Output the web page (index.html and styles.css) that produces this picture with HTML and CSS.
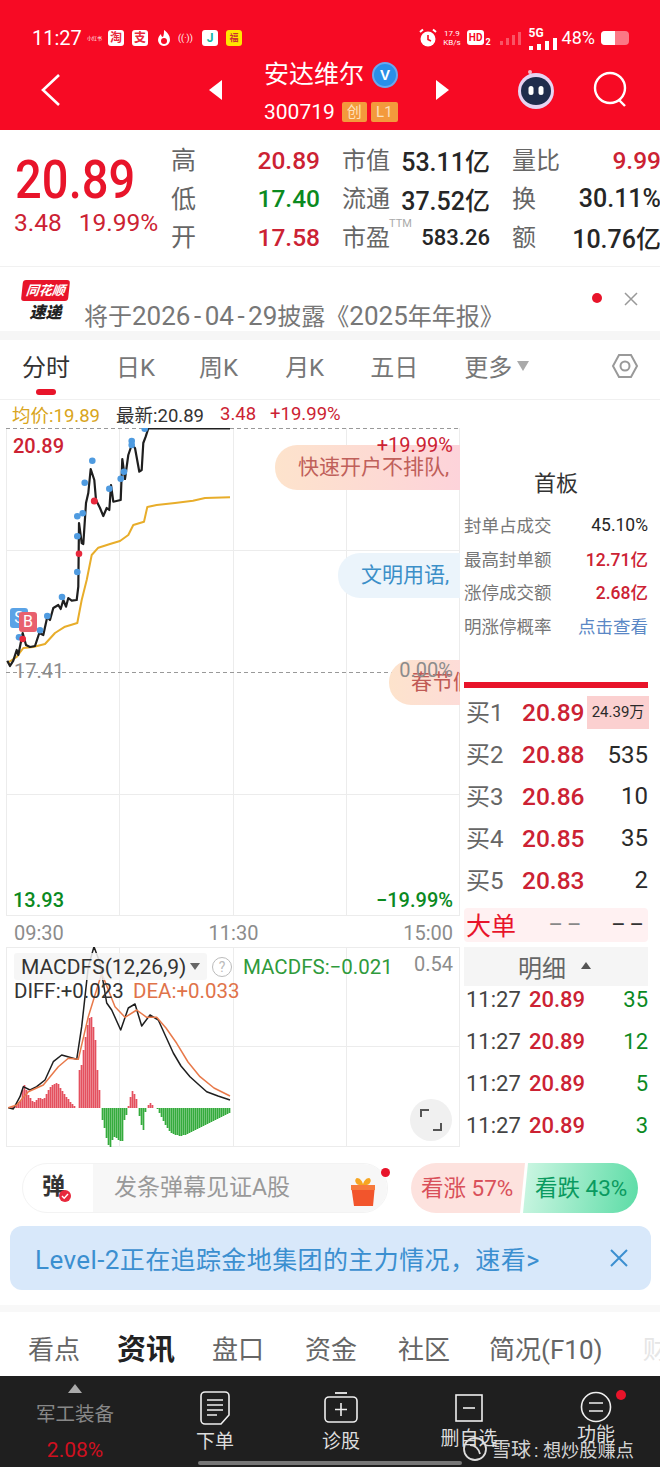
FILE: index.html
```html
<!DOCTYPE html>
<html lang="zh-CN">
<head>
<meta charset="utf-8">
<title>安达维尔 300719</title>
<link rel="stylesheet" href="styles.css">
</head>
<body>
<div class="app">
  <header class="top">
    <div class="status">
      <span class="clock">11:27</span>
      <span class="st-tiny">小红书</span>
      <span class="st-app st-red">淘</span>
      <span class="st-app st-red2">支</span>
      <svg class="st-ico" width="16" height="18" viewBox="0 0 16 18"><path d="M8 1c3 2 6 5 6 10a6 6 0 0 1-12 0c0-3 2-5 3-6 0 2 1 3 2 3 1-2 1-5 1-7z" fill="#fff"/><circle cx="8" cy="12" r="3" fill="#f70a24"/></svg>
      <span class="st-wifi">((·))</span>
      <span class="st-app st-j">J</span>
      <span class="st-app st-y">福</span>
      <span class="st-spacer"></span>
      <svg class="st-ico" width="18" height="20" viewBox="0 0 18 20"><circle cx="9" cy="11" r="7.5" fill="#fff"/><path d="M9 7v4.5l3 1.5" stroke="#f70a24" stroke-width="1.6" fill="none"/><path d="M1 4l3-2.5M17 4l-3-2.5" stroke="#fff" stroke-width="2"/></svg>
      <span class="st-speed">17.9<br>KB/s</span>
      <span class="st-hd">HD</span><span class="st-hd2">2</span>
      <svg class="st-sig st-sig-a" width="22" height="14" viewBox="0 0 22 14"><g fill="#fff" opacity=".3"><rect x="0" y="10" width="3" height="4"/><rect x="6" y="7" width="3" height="7"/><rect x="12" y="4" width="3" height="10"/><rect x="18" y="1" width="3" height="13"/></g></svg>
      <span class="st-5g">5G</span>
      <svg class="st-sig st-sig-b" width="28" height="12" viewBox="0 0 28 12"><g fill="#fff"><rect x="0" y="8" width="4" height="4"/><rect x="8" y="6" width="4" height="6"/><rect x="16" y="3" width="4" height="9"/><rect x="24" y="0" width="4" height="12"/></g></svg>
      <span class="st-batt-text">48%</span>
      <span class="batt"><span class="batt-fill"></span></span>
    </div>
    <nav class="nav">
      <svg class="back" width="22" height="34" viewBox="0 0 22 34"><path d="M19 2 3 17l16 15" fill="none" stroke="#fff" stroke-width="2.6"/></svg>
      <span class="tri-l"></span>
      <div class="title">
        <div class="t-name">安达维尔<span class="vbadge">V</span></div>
        <div class="t-code">300719<span class="tag t1">创</span><span class="tag t2">L1</span></div>
      </div>
      <span class="tri-r"></span>
      <svg class="robot" width="40" height="42" viewBox="0 0 40 42"><circle cx="14" cy="4" r="2" fill="#f6b5c5"/><path d="M14 5l3 5" stroke="#f6b5c5" stroke-width="1.5"/><circle cx="20" cy="23" r="18" fill="#e6d4f2"/><ellipse cx="20" cy="23" rx="15" ry="14" fill="#1f2c4c"/><rect x="12.5" y="18" width="5" height="9" rx="2.5" fill="#fff"/><rect x="22.5" y="18" width="5" height="9" rx="2.5" fill="#fff"/></svg>
      <svg class="search" width="36" height="38" viewBox="0 0 36 38"><circle cx="17" cy="17" r="15" fill="none" stroke="#fff" stroke-width="2.4"/><path d="m26 29 6 6" stroke="#fff" stroke-width="2.4"/></svg>
    </nav>
  </header>

  <section class="quote">
    <div class="q-main">
      <div class="q-price">20.89</div>
      <div class="q-sub"><span>3.48</span><span>19.99%</span></div>
    </div>
    <div class="q-grid">
      <div class="cell"><span class="lab lab-big">高</span><b class="up">20.89</b></div>
      <div class="cell"><span class="lab">市值</span><b class="dark">53.11亿</b></div>
      <div class="cell"><span class="lab">量比</span><b class="up">9.99</b></div>
      <div class="cell"><span class="lab lab-big">低</span><b class="down">17.40</b></div>
      <div class="cell"><span class="lab">流通</span><b class="dark">37.52亿</b></div>
      <div class="cell"><span class="lab">换</span><b class="dark">30.11%</b></div>
      <div class="cell"><span class="lab lab-big">开</span><b class="up">17.58</b></div>
      <div class="cell"><span class="lab">市盈<sup class="ttm">TTM</sup></span><b class="dark small">583.26</b></div>
      <div class="cell"><span class="lab">额</span><b class="dark">10.76亿</b></div>
    </div>
  </section>

  <section class="notice">
    <div class="logo"><span class="logo-a">同花顺</span><span class="logo-b">速递</span></div>
    <div class="n-text">将于<span class="n-num">2026<span class="hy">-</span>04<span class="hy">-</span>29</span>披露《<span class="n-num">2025</span>年年报》</div>
    <span class="n-dot"></span>
    <svg class="n-x" width="14" height="14" viewBox="0 0 14 14"><path d="m1 1 12 12M13 1 1 13" stroke="#999" stroke-width="1.5"/></svg>
  </section>
  <div class="band"></div>

  <div class="tabs">
    <span class="tab on">分时</span>
    <span class="tab t-r">日K</span>
    <span class="tab t-z">周K</span>
    <span class="tab t-y">月K</span>
    <span class="tab t-w">五日</span>
    <span class="tab t-m">更多<i class="caret"></i></span>
    <svg class="hex" width="28" height="28" viewBox="0 0 28 28"><path d="M8 3h12l6 11-6 11H8L2 14z" fill="none" stroke="#999" stroke-width="2"/><circle cx="14" cy="14" r="4.5" fill="none" stroke="#999" stroke-width="2"/></svg>
  </div>

  <div class="legend"><span class="avg">均价:19.89</span><span class="new">最新:20.89</span><span class="up">3.48</span><span class="up">+19.99%</span></div>

  <div class="main">
    <div class="left">
      <div class="chart">
        <svg class="plot" width="460" height="488" viewBox="0 428 460 488">
          <g stroke="#ececec" stroke-width="1" fill="none">
            <path d="M6.5 428v488M119.5 428v488M233.5 428v488M346.5 428v488M459.5 428v488M6.5 550.5h453M6.5 794.5h453M6.5 915.5h453"/>
          </g>
          <path d="M6 428.5h454M6 672.5h454" stroke="#999" stroke-width="1" stroke-dasharray="4 3" fill="none"/>
          <polyline fill="none" stroke="#e8ad2a" stroke-width="2" stroke-linejoin="round" points="7.3,663 16.7,657 23.3,648 33.3,647 45,644 55,633 65,626.7 77.3,623 81.7,600 86.7,580 91.7,555 98.3,547.7 110,544 120,541 128.3,535 133.3,525 144,521.7 147.3,507 156.7,505 175,503 193,500.7 205,498 230,497.3"/>
          <polyline fill="none" stroke="#1f1f1f" stroke-width="2.2" stroke-linejoin="round" points="7.3,660.7 10,666 13.3,660.7 16.7,650 18.3,655 20.7,643 22.7,633 26,645 30,647 35,646 39.3,633 43.3,635 47.3,616.7 50,620 53.3,608 58.3,605 60.7,609 63.3,600 66,606.7 68.3,598 71.7,600.7 76.7,600 78.3,586.7 79,523 81.7,543 83.3,544 86,503 88.3,493 90.7,469 94.3,480 96,500 100,508 103.3,516 106.7,508 109.3,510 111,485 113.3,501.7 120.7,500 122.3,459 125,479 128.3,455 131.7,445 135,448 139.3,471.7 141.7,470 143.3,443 145.7,436.7 148.3,428.5 230,428.5"/>
          <g fill="#4f9be0">
            <circle cx="92.3" cy="460.7" r="3.3"/><circle cx="84.7" cy="482.7" r="3.3"/><circle cx="77.3" cy="516.3" r="3.3"/><circle cx="82.7" cy="513.3" r="3.3"/><circle cx="77.3" cy="536.3" r="3.3"/><circle cx="77.3" cy="572" r="3.3"/><circle cx="62" cy="597" r="3.3"/><circle cx="47.3" cy="616" r="3.3"/><circle cx="40" cy="630.3" r="3.3"/><circle cx="19" cy="637.3" r="3.3"/><circle cx="109.3" cy="488.7" r="3.3"/><circle cx="120.7" cy="478.7" r="3.3"/><circle cx="124" cy="471.7" r="3.3"/><circle cx="131.7" cy="441" r="3.3"/><circle cx="131.7" cy="445" r="3.3"/><circle cx="144.7" cy="428.7" r="3.3"/>
          </g>
          <g fill="#e8283c">
            <circle cx="94.3" cy="501" r="3.5"/><circle cx="79" cy="553.7" r="3.3"/><circle cx="22.7" cy="639" r="3.3"/>
          </g>
        </svg>
        <span class="mark mark-s">S</span>
        <span class="mark mark-b">B</span>
        <span class="pill pill-a">快速开户不排队,</span>
        <span class="pill pill-b">文明用语,</span>
        <span class="pill pill-c">春节假</span>
        <span class="c-lab l1 up">20.89</span>
        <span class="c-lab r1 up">+19.99%</span>
        <span class="c-lab l2 grey">17.41</span>
        <span class="c-lab r2 grey">0.00%</span>
        <span class="c-lab l3 down">13.93</span>
        <span class="c-lab r3 down">−19.99%</span>
      </div>
      <div class="axis"><span>09:30</span><span>11:30</span><span>15:00</span></div>
      <div class="macd">
        <svg class="plot" width="460" height="200" viewBox="0 947 460 200">
          <path d="M6.5 947v200M119.5 947v200M233.5 947v200M346.5 947v200M459.5 947v200M6.5 947.5h453M6.5 1046.5h453M6.5 1146.5h453" stroke="#ececec" fill="none"/>
          <g transform="translate(.5 0)">
          <path stroke="#e4505e" stroke-width="1.7" fill="none" d="M12 1108V1107M14 1108V1106M16 1108V1104M18 1108V1102M20 1108V1101M22 1108V1090M24 1108V1085M26 1108V1090M28 1108V1095M30 1108V1098M32 1108V1101M34 1108V1102M36 1108V1100M38 1108V1098M40 1108V1098M42 1108V1099M44 1108V1098M46 1108V1094M48 1108V1090M50 1108V1087M52 1108V1085M54 1108V1084M56 1108V1083M58 1108V1084M60 1108V1088M62 1108V1091M64 1108V1094M66 1108V1097M68 1108V1099M70 1108V1102M72 1108V1104M74 1108V1106M79 1108V1070M81 1108V1065M83 1108V1050M85 1108V1037M87 1108V1025M89 1108V1018M91 1108V1017M93 1108V1027M95 1108V1040M97 1108V1070M99 1108V1090M128 1108V1106M130 1108V1097M132 1108V1091M134 1108V1094M136 1108V1099M148 1108V1105M150 1108V1103M152 1108V1105"/>
          <path stroke="#34ab3c" stroke-width="1.7" fill="none" d="M102 1108V1120M104 1108V1128M106 1108V1138M108 1108V1145M110 1108V1147M112 1108V1140M114 1108V1137M116 1108V1138M118 1108V1140M120 1108V1141M122 1108V1141M124 1108V1120M126 1108V1115M139 1108V1116M141 1108V1125M143 1108V1130M145 1108V1112M157 1108V1109M159 1108V1113M161 1108V1117M163 1108V1121M165 1108V1125M167 1108V1128M169 1108V1131M171 1108V1133M173 1108V1134M175 1108V1135M177 1108V1135M179 1108V1136M181 1108V1136M183 1108V1135M185 1108V1135M187 1108V1134M189 1108V1133M191 1108V1132M193 1108V1131M195 1108V1130M197 1108V1129M199 1108V1128M201 1108V1127M203 1108V1126M205 1108V1125M207 1108V1124M209 1108V1123M211 1108V1122M213 1108V1121M215 1108V1120M217 1108V1119M219 1108V1118M221 1108V1117M223 1108V1116M225 1108V1115M227 1108V1114M229 1108V1113"/>
          </g>
          <polyline fill="none" stroke="#1f1f1f" stroke-width="1.5" stroke-linejoin="round" points="8.3,1107.7 13.3,1109 20,1096.7 23.3,1086.7 30,1090 36.7,1086.7 45,1080 53.3,1061.7 61.7,1055 76.7,1059.3 81.7,1026.7 88.3,966.7 94,946.7 100,963 106.7,1003 111.7,1010 120.7,1030 128.3,1008 135,1004 141.7,1026 150,1015 158.3,1020 166,1037 173.3,1053 181,1066 190,1076.7 198,1084 206.7,1091.7 218,1096 230,1100"/>
          <polyline fill="none" stroke="#e8794a" stroke-width="1.5" stroke-linejoin="round" points="8.3,1107.7 16.7,1105 28.3,1091.7 43.3,1085 58.3,1066.7 68.3,1058.3 78.3,1059.3 88.3,1016.7 101.7,973.3 115,1006.7 125,1017.3 136.7,1010 146.7,1017.3 156.7,1017.3 166,1028 176.7,1043.3 188,1062 200,1076.7 214,1088 230,1096"/>
        </svg>
        <div class="m-select"><span class="m-name">MACDFS(12,26,9)</span><i class="m-caret"></i></div>
        <span class="m-help">?</span>
        <span class="m-val">MACDFS:−0.021</span>
        <span class="m-top">0.54</span>
        <span class="m-diff">DIFF:+0.023</span>
        <span class="m-dea">DEA:+0.033</span>
        <span class="m-full"><svg width="24" height="24" viewBox="0 0 24 24"><path d="M2 9V2h8M22 15v7h-8" fill="none" stroke="#555" stroke-width="2"/></svg></span>
      </div>
    </div>

    <aside class="side">
      <h2 class="s-head">首板</h2>
      <div class="s-row"><span>封单占成交</span><b class="dark">45.10%</b></div>
      <div class="s-row"><span>最高封单额</span><b class="up">12.71亿</b></div>
      <div class="s-row"><span>涨停成交额</span><b class="up">2.68亿</b></div>
      <div class="s-row"><span>明涨停概率</span><b class="link">点击查看</b></div>
      <div class="s-bar"></div>
      <div class="bk"><span class="bk-n">买1</span><b class="up">20.89</b><span class="bk-v bk-hl">24.39万</span></div>
      <div class="bk"><span class="bk-n">买2</span><b class="up">20.88</b><span class="bk-v">535</span></div>
      <div class="bk"><span class="bk-n">买3</span><b class="up">20.86</b><span class="bk-v">10</span></div>
      <div class="bk"><span class="bk-n">买4</span><b class="up">20.85</b><span class="bk-v">35</span></div>
      <div class="bk"><span class="bk-n">买5</span><b class="up">20.83</b><span class="bk-v">2</span></div>
      <div class="big"><span class="big-n">大单</span><span class="big-a">––</span><span class="big-b">––</span></div>
      <div class="detail"><span>明细</span><i class="d-caret"></i></div>
      <div class="ticks">
        <div class="tick"><span class="tk-t">11:27</span><b class="up">20.89</b><b class="down tk-v">35</b></div>
        <div class="tick"><span class="tk-t">11:27</span><b class="up">20.89</b><b class="down tk-v">12</b></div>
        <div class="tick"><span class="tk-t">11:27</span><b class="up">20.89</b><b class="down tk-v">5</b></div>
        <div class="tick"><span class="tk-t">11:27</span><b class="up">20.89</b><b class="down tk-v">3</b></div>
      </div>
    </aside>
  </div>

  <section class="social">
    <div class="dm">
      <div class="dm-l"><span class="dm-g">弹</span><svg class="dm-c" width="12" height="12" viewBox="0 0 12 12"><circle cx="6" cy="6" r="6" fill="#e8283c"/><path d="m3 6 2.2 2.2L9 4" stroke="#fff" stroke-width="1.4" fill="none"/></svg></div>
      <div class="dm-in">发条弹幕见证A股</div>
      <svg class="gift" width="28" height="32" viewBox="0 0 28 32"><path d="M8 2c3 0 5 3 6 6 1-3 3-6 6-6 3 1 2 6-2 7H10C6 8 5 3 8 2z" fill="#f6a623"/><path d="M2 9h24l-2 21H5z" fill="#f2552c"/><path d="M2 9h24v5H2z" fill="#f77a3c"/></svg>
      <span class="dm-dot"></span>
    </div>
    <div class="vote"><span class="v-up">看涨 57%</span><span class="v-dn">看跌 43%</span></div>
  </section>

  <section class="lv2">
    <span class="lv-t"><span class="lv-en">Level-2</span>正在追踪金地集团的主力情况，速看&gt;</span>
    <svg width="20" height="20" viewBox="0 0 20 20"><path d="m2 2 16 16M18 2 2 18" stroke="#3b8fd0" stroke-width="2"/></svg>
  </section>
  <div class="band band2"></div>

  <div class="subtabs">
    <span class="st st1">看点</span><span class="st st2">资讯</span><span class="st st3">盘口</span><span class="st st4">资金</span><span class="st st5">社区</span><span class="st st6">简况(F10)</span><span class="st st7">财</span>
  </div>

  <footer class="bar">
    <div class="b-sector"><i class="b-tri"></i><span class="b-name">军工装备</span><span class="b-pct">2.08%</span></div>
    <div class="b-item bi1">
      <svg width="30" height="34" viewBox="0 0 30 34"><path d="M5 1h20a4 4 0 0 1 4 4v19l-8 9H5a4 4 0 0 1-4-4V5a4 4 0 0 1 4-4z" fill="none" stroke="#eee" stroke-width="1.6"/><path d="M7 9h16M7 14h16M7 19h16M7 24h10" stroke="#eee" stroke-width="1.6"/></svg>
      <span>下单</span>
    </div>
    <div class="b-item bi2">
      <svg width="36" height="34" viewBox="0 0 36 34"><path d="M12 2h12" stroke="#eee" stroke-width="1.8"/><rect x="2" y="6" width="32" height="25" rx="4" fill="none" stroke="#eee" stroke-width="1.6"/><path d="M18 12v13M12 18.500h12" stroke="#eee" stroke-width="1.6"/></svg>
      <span>诊股</span>
    </div>
    <div class="b-item bi3">
      <svg width="28" height="28" viewBox="0 0 28 28"><rect x="1" y="1" width="26" height="26" fill="none" stroke="#eee" stroke-width="1.6"/><path d="M8 14h12" stroke="#eee" stroke-width="1.6"/></svg>
      <span>删自选</span>
    </div>
    <div class="b-item bi4">
      <svg width="32" height="32" viewBox="0 0 32 32"><circle cx="16" cy="16" r="14.500" fill="none" stroke="#eee" stroke-width="1.6"/><path d="M9 12h14M9 20h14" stroke="#eee" stroke-width="1.6"/></svg>
      <span>功能</span>
      <i class="b-dot"></i>
    </div>
    <div class="mark-wm"><svg width="26" height="26" viewBox="0 0 26 26"><circle cx="13" cy="13" r="11" fill="none" stroke="#ddd" stroke-width="1.8"/><path d="M8 9c5 0 9 4 10 9" stroke="#ddd" stroke-width="1.8" fill="none"/></svg><span class="wm-a">雪球</span><span class="wm-b">: 想炒股赚点</span></div>
    <i class="home"></i>
  </footer>
</div>
</body>
</html>
```
FILE: styles.css
```css
* { box-sizing: border-box; }
html, body { margin: 0; padding: 0; background: #fff; }
body { font-family: Roboto, "Noto Sans CJK SC", sans-serif; color: #222; }
.app { width: 660px; height: 1467px; overflow: hidden; display: flex; flex-direction: column; }
i { display: block; font-style: normal; }
b { font-weight: 500; }
.up { color: #cc2233; }
.down { color: #0b8a1f; }
.dark { color: #262626; }
.grey { color: #8c8c8c; }

/* header */
.top { height: 130px; background: #f70a24; color: #fff; flex: none; }
.status { height: 55px; padding: 20px 0 0 32px; display: flex; align-items: center; }
.clock { font-size: 20px; width: 46px; }
.st-tiny { font-size: 5px; margin-left: 9px; width: 14px; white-space: nowrap; }
.st-app { width: 16px; height: 16px; border-radius: 3px; background: #fff; color: #e8283c; font-size: 12px; line-height: 16px; text-align: center; margin-left: 8px; font-weight: 700; }
.st-red { margin-left: 7px; }
.st-j { color: #12b5a5; margin-left: 7px; }
.st-y { background: #ffe600; color: #c33; font-size: 9px; margin-left: 8px; }
.st-ico { margin-left: 8px; flex: none; }
.st-wifi { font-size: 9px; margin-left: 6px; width: 17px; white-space: nowrap; }
.st-spacer { flex: 1; }
.st-speed { font-size: 8px; line-height: 9px; text-align: center; margin-left: 5px; width: 20px; }
.st-hd { background: #fff; color: #f70a24; font-size: 10px; font-weight: 700; border-radius: 3px; padding: 0 2px; line-height: 15px; margin-left: 5px; }
.st-hd2 { font-size: 9px; font-weight: 700; align-self: flex-end; margin-bottom: 8px; margin-left: 1px; }
.st-sig { flex: none; }
.st-sig-a { margin-left: 9px; }
.st-sig-b { margin-top: 12px; }
.st-5g { font-size: 12px; font-weight: 700; margin-left: 7px; width: 0; align-self: flex-start; margin-top: 6px; }
.st-batt-text { font-size: 18px; margin-left: 5px; }
.batt { width: 28px; height: 14px; margin: 0 31px 0 6px; background: rgba(255,255,255,.45); border-radius: 4px; display: block; }
.batt-fill { display: block; width: 14px; height: 14px; background: #fff; border-radius: 4px 0 0 4px; }

.nav { height: 75px; display: flex; align-items: center; position: relative; }
.back { margin-left: 40px; flex: none; margin-top: -5px; }
.tri-l { width: 0; height: 0; border: 10px solid transparent; border-left: 0; border-right: 13px solid #fff; margin: -6px 0 0 147px; }
.title { width: 214px; padding-left: 42px; }
.t-name { font-size: 25px; line-height: 34px; display: flex; align-items: center; }
.vbadge { width: 26px; height: 26px; border-radius: 50%; background: #2a8fe8; border: 2px solid #6aa8ef; font-size: 15px; font-weight: 900; line-height: 22px; text-align: center; margin-left: 8px; font-family: "Liberation Sans", sans-serif; }
.t-code { font-size: 21px; line-height: 30px; margin-top: 5px; display: flex; align-items: center; }
.tag { background: #f39a3c; color: #fde0bb; font-size: 15px; line-height: 20px; height: 20px; width: 25px; text-align: center; margin-left: 7px; border-radius: 2px; }
.t2 { width: 27px; margin-left: 4px; }
.tri-r { width: 0; height: 0; border: 10px solid transparent; border-right: 0; border-left: 13px solid #fff; margin: -6px 0 0 0; }
.robot { margin: -7px 0 0 67px; flex: none; }
.search { margin: -5px 0 0 37px; flex: none; }

/* quote */
.quote { height: 136px; flex: none; display: flex; position: relative; padding-top: 11px; }
.q-main { width: 171px; padding-left: 15px; flex: none; white-space: nowrap; }
.q-price { font-size: 47px; font-weight: 500; color: #e8142a; line-height: 56px; margin-top: 11px; letter-spacing: .1px; transform: scaleY(1.14); transform-origin: 50% 50%; }
.q-sub { display: flex; gap: 17px; color: #cc2233; font-size: 24.500px; line-height: 30px; margin-left: -1px; }
.q-grid { display: grid; grid-template-columns: 149px 148px 149px; column-gap: 22px; grid-auto-rows: 38.6px; width: 489px; }
.cell { display: flex; justify-content: space-between; align-items: center; white-space: nowrap; }
.cell b { font-size: 25px; }
.cell b.up, .cell b.down { font-size: 24.500px; }
.cell b.small { font-size: 22px; }
.lab { font-size: 24px; color: #666; position: relative; margin-top: -4px; }
.lab-big { font-size: 25px; }
.ttm { font-size: 11px; position: absolute; left: 47px; top: -2px; color: #aaa; line-height: 16px; }

/* notice */
.notice { height: 65px; flex: none; margin: 0; position: relative; display: flex; border-top: 1px solid #f1f1f1; }
.logo { width: 62px; margin-left: 22px; padding-top: 13px; flex: none; }
.logo-a { display: block; width: 47px; height: 21px; background: #e8142a; color: #fff; font-size: 13px; font-weight: 700; font-style: italic; line-height: 21px; text-align: center; border-radius: 3px; transform: skewX(-6deg); }
.logo-b { display: block; width: 47px; text-align: center; font-size: 16px; font-weight: 900; font-style: italic; line-height: 22px; color: #222; margin-top: 1px; }
.n-text { font-size: 24px; color: #777; padding-top: 33px; line-height: 33px; white-space: nowrap; }
.n-num { font-size: 26px; }
.hy { padding: 0 3.500px; }
.n-dot { position: absolute; left: 592px; top: 26px; width: 10px; height: 10px; background: #e8142a; border-radius: 50%; }
.n-x { position: absolute; left: 624px; top: 25px; }
.band { height: 9px; flex: none; background: #f6f6f6; }

/* tabs */
.tabs { height: 60px; flex: none; position: relative; display: flex; align-items: center; font-size: 24px; color: #777; border-bottom: 1px solid #f0f0f0; padding-bottom: 8px; }
.tab { white-space: nowrap; display: flex; align-items: center; }
.tab.on { color: #333; margin-left: 22px; position: relative; }
.tab.on::after { content: ""; position: absolute; left: 14px; bottom: -12px; width: 20px; height: 6px; border-radius: 3px; background: #e8142a; }
.t-r { margin-left: 46px; }
.t-z { margin-left: 44px; }
.t-y { margin-left: 47px; }
.t-w { margin-left: 46px; }
.t-m { margin-left: 46px; }
.caret { width: 0; height: 0; border: 6px solid transparent; border-top: 10px solid #aaa; border-bottom: 0; margin-left: 5px; }
.hex { margin-left: 82px; flex: none; }

.legend { height: 28px; flex: none; display: flex; align-items: center; font-size: 18.500px; padding-left: 12px; white-space: nowrap; }
.avg { color: #d9a520; width: 104px; }
.new { color: #333; width: 104px; }
.legend .up { margin-right: 14px; }

/* chart */
.main { display: flex; height: 719px; flex: none; }
.left { width: 460px; flex: none; }
.chart { height: 488px; position: relative; overflow: hidden; }
.plot { display: block; }
.chart .plot, .macd .plot { position: absolute; left: 0; top: 0; }
.mark { position: absolute; width: 18px; height: 20px; border-radius: 3px; color: #fff; font-size: 16px; line-height: 20px; text-align: center; }
.mark-s { left: 10px; top: 180px; background: #5ba3e6; }
.mark-b { left: 19px; top: 184px; background: #e8606e; }
.pill { position: absolute; height: 45px; line-height: 45px; font-size: 21px; border-radius: 22px 0 0 22px; white-space: nowrap; overflow: hidden; right: 0; }
.pill-a { top: 17px; width: 185px; padding-left: 23px; background: linear-gradient(90deg, #fde3cc, #fdd3da); color: #c0605a; }
.pill-b { top: 125px; width: 122px; padding-left: 23px; background: #ebf4fb; color: #3b8fc8; }
.pill-c { top: 232px; width: 71px; padding-left: 22px; background: linear-gradient(90deg, #fde3cc, #fddcd8); color: #c05a55; }
.c-lab { position: absolute; font-size: 20px; line-height: 24px; font-weight: 500; white-space: nowrap; }
.l1 { left: 13px; top: 6px; }
.r1 { right: 7px; top: 5px; font-weight: 400; }
.l2 { left: 14px; top: 231px; font-weight: 400; }
.r2 { right: 7px; top: 230px; font-weight: 400; }
.l3 { left: 13px; top: 460px; }
.r3 { right: 7px; top: 460px; }
.axis { height: 31px; display: flex; justify-content: space-between; align-items: center; padding: 2px 7px 0 14px; font-size: 20px; color: #8c8c8c; }
.macd { height: 200px; position: relative; }
.m-select { position: absolute; left: 14px; top: 6px; width: 193px; height: 27px; background: rgba(245,245,245,.85); border-radius: 3px; display: flex; align-items: center; padding-left: 7px; }
.m-name { font-size: 21px; color: #333; white-space: nowrap; width: 169px; }
.m-caret { width: 0; height: 0; border: 5px solid transparent; border-top: 7px solid #666; border-bottom: 0; }
.m-help { position: absolute; left: 212px; top: 10px; width: 20px; height: 20px; border: 1.500px solid #bbb; border-radius: 50%; color: #bbb; font-size: 14px; line-height: 18px; text-align: center; }
.m-val { position: absolute; left: 243px; top: 7px; font-size: 20.500px; line-height: 26px; color: #2f9a3c; white-space: nowrap; }
.m-top { position: absolute; right: 7px; top: 5px; font-size: 20px; line-height: 24px; color: #8c8c8c; }
.m-diff { position: absolute; left: 14px; top: 31px; font-size: 20.500px; line-height: 26px; color: #333; white-space: nowrap; }
.m-dea { position: absolute; left: 133px; top: 31px; font-size: 20.500px; line-height: 26px; color: #e0734a; white-space: nowrap; }
.m-full { position: absolute; left: 410px; top: 152px; width: 42px; height: 42px; border-radius: 50%; background: #f0f0f0; display: flex; align-items: center; justify-content: center; }

/* side */
.side { width: 200px; flex: none; padding: 0 12px 0 4px; }
.s-head { font-size: 22px; font-weight: 400; line-height: 32px; margin: 40px 0 8px; text-align: center; color: #333; }
.s-row { height: 33.500px; display: flex; justify-content: space-between; align-items: center; font-size: 17.500px; color: #777; white-space: nowrap; }
.s-row b { font-weight: 500; font-size: 17.500px; }
.s-row b.dark { font-weight: 400; }
.s-row b.link { color: #5a87c5; font-weight: 400; }
.s-bar { height: 6px; background: #e8142a; margin-top: 40px; margin-bottom: 4px; }
.bk { height: 41.800px; display: grid; grid-template-columns: 56px 61px 1fr; align-items: center; padding-left: 2px; white-space: nowrap; }
.bk-n { font-size: 24px; color: #666; margin-top: -4px; }
.bk b { font-size: 24.500px; }
.bk-v { font-size: 24px; color: #2a2a2a; text-align: right; }
.bk-hl { font-size: 15px; background: #fbd0d0; height: 33px; line-height: 33px; width: 62px; text-align: center; justify-self: end; margin-right: -1px; }
.big { height: 34px; margin-top: 7px; background: #fff1f2; border-radius: 4px; display: flex; align-items: center; position: relative; }
.big-n { color: #e8142a; font-size: 25px; margin-left: 2px; width: 87px; margin-top: -2px; }
.big-a { color: #888; width: 66px; font-size: 22px; letter-spacing: 4px; }
.big-b { color: #333; font-size: 22px; letter-spacing: 4px; }
.detail { height: 39px; margin-top: 5px; background: #f5f5f5; display: flex; align-items: center; font-size: 24px; color: #666; padding-left: 54px; }
.d-caret { width: 0; height: 0; border: 5px solid transparent; border-bottom: 7px solid #555; border-top: 0; margin: 0 0 2px 15px; }
.ticks { display: flex; flex-direction: column; gap: 14px; }
.tick { height: 28px; display: grid; grid-template-columns: 63px 54px 1fr; align-items: center; padding-left: 2px; font-size: 22px; white-space: nowrap; }
.tk-t { color: #444; }
.tick b { font-weight: 500; }
.tick b.tk-v { text-align: right; font-weight: 400; }

/* social */
.social { height: 79px; flex: none; padding: 16px 22px 0; display: flex; }
.dm { width: 366px; height: 50px; border-radius: 25px; position: relative; display: flex; border: 1px solid #f3f3f3; }
.dm-l { width: 70px; position: relative; padding: 5px 0 0 19px; }
.dm-g { font-size: 23px; font-weight: 700; color: #333; line-height: 36px; }
.dm-c { position: absolute; left: 36px; top: 26px; }
.dm-in { flex: 1; background: #f7f7f7; border-radius: 0 25px 25px 0; font-size: 23px; line-height: 48px; color: #999; padding-left: 21px; }
.gift { position: absolute; left: 326px; top: 12px; }
.dm-dot { position: absolute; left: 358px; top: 4px; width: 9px; height: 9px; border-radius: 50%; background: #e8142a; }
.vote { display: flex; margin-left: 23px; width: 227px; height: 50px; border-radius: 25px; overflow: hidden; font-size: 22.500px; line-height: 50px; white-space: nowrap; }
.v-up { width: 114px; padding-left: 10px; background: #fde2de; color: #d9505a; clip-path: polygon(0 0, 100% 0, calc(100% - 5px) 100%, 0 100%); }
.v-dn { flex: 1; padding-left: 12px; margin-left: -2px; background: linear-gradient(100deg, #cdf6e3, #5cdca6); color: #0a9a60; clip-path: polygon(5px 0, 100% 0, 100% 100%, 0 100%); }

.lv2 { height: 64px; flex: none; margin: 0 9px 0 10px; background: #d8e8fa; border-radius: 12px; display: flex; align-items: center; justify-content: space-between; padding: 0 22px 0 25px; color: #3b8fd0; font-size: 25px; white-space: nowrap; }
.lv-t { letter-spacing: .4px; }
.lv-en { font-size: 26px; }
.band2 { height: 7px; margin-top: 15px; background: #f8f8f8; }

.subtabs { height: 64px; flex: none; display: flex; align-items: center; padding: 6px 0 0 28px; font-size: 26px; color: #666; white-space: nowrap; overflow: hidden; }
.st2 { font-size: 29px; font-weight: 700; color: #222; margin-left: 37px; }
.st3 { margin-left: 37px; }
.st4, .st5 { margin-left: 41px; }
.st6 { margin-left: 39px; }
.st7 { margin-left: 40px; color: #e6e6e6; flex: none; }

/* bottom */
.bar { height: 91px; flex: none; background: #1f1f1f; position: relative; color: #ddd; display: flex; }
.b-sector { width: 150px; display: flex; flex-direction: column; align-items: center; padding-top: 8px; }
.b-tri { width: 0; height: 0; border: 7px solid transparent; border-bottom: 9px solid #aaa; border-top: 0; }
.b-name { font-size: 19.500px; color: #888; line-height: 28px; margin-top: 8px; }
.b-pct { font-size: 21px; color: #d01020; line-height: 28px; margin-top: 7px; }
.b-item { position: absolute; top: 0; display: flex; flex-direction: column; align-items: center; font-size: 19px; width: 80px; }
.b-item span { line-height: 24px; }
.bi1 { left: 175px; padding-top: 15px; }
.bi1 span { margin-top: 5px; }
.bi2 { left: 301px; padding-top: 15px; }
.bi2 span { margin-top: 5px; }
.bi3 { left: 429px; padding-top: 18px; }
.bi3 span { margin-top: 5px; }
.bi4 { left: 556px; padding-top: 15px; }
.b-dot { position: absolute; left: 60px; top: 14px; width: 10px; height: 10px; border-radius: 50%; background: #e8142a; }
.mark-wm { position: absolute; left: 462px; top: 58px; display: flex; align-items: center; gap: 3px; color: rgba(235,235,235,.9); white-space: nowrap; }
.wm-a { font-size: 20px; }
.wm-b { font-size: 18.200px; }
.home { position: absolute; left: 198px; top: 85px; width: 264px; height: 4px; border-radius: 2px; background: #777; }
```
